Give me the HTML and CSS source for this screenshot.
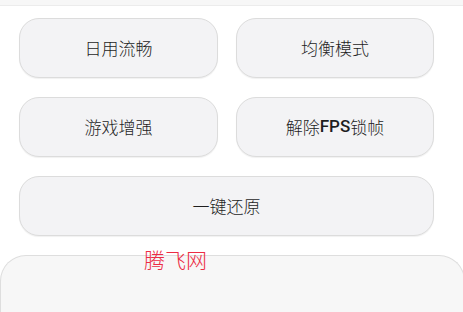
FILE: index.html
```html
<!DOCTYPE html>
<html lang="zh">
<head>
<meta charset="utf-8">
<link rel="stylesheet" href="styles.css">
</head>
<body>
<div class="topbar"></div>
<div class="grid">
  <div class="btn">日用流畅</div>
  <div class="btn">均衡模式</div>
  <div class="btn">游戏增强</div>
  <div class="btn">解除<span class="latin">FPS</span>锁帧</div>
  <div class="btn wide">一键还原</div>
</div>
<div class="panel-wrap">
  <div class="watermark">腾飞网</div>
  <div class="panel"></div>
</div>
</body>
</html>
```
FILE: styles.css
```css
html, body {
  margin: 0;
  padding: 0;
  background: #ffffff;
  width: 463px;
  height: 312px;
  overflow: hidden;
  font-family: Roboto, "Noto Sans CJK SC", sans-serif;
}
.topbar {
  height: 5px;
  background: #f7f7f7;
  border-bottom: 1px solid #ececec;
}
.grid {
  display: grid;
  grid-template-columns: 199px 198px;
  column-gap: 18px;
  row-gap: 19px;
  margin: 12px 0 0 19px;
}
.btn {
  box-sizing: border-box;
  height: 60px;
  border: 1.5px solid #dcdcdc;
  border-radius: 20px;
  background: #f3f3f5;
  box-shadow: 0 1px 1px rgba(0,0,0,0.06);
  display: flex;
  align-items: center;
  justify-content: center;
  font-size: 17px;
  font-weight: 300;
  color: #1e1e1e;
  padding-bottom: 2px;
}
.latin {
  font-weight: 500;
}
.wide {
  grid-column: 1 / 3;
}
.panel-wrap {
  position: relative;
  margin-top: 19px;
}
.panel {
  height: 60px;
  background: #f7f7f7;
  border: 1px solid #dedede;
  border-bottom: none;
  border-radius: 26px 26px 0 0;
  margin-right: -2px;
}
.watermark {
  position: absolute;
  left: 144px;
  top: -8px;
  font-size: 21px;
  line-height: 24px;
  color: #ec2c44;
  font-family: "Noto Sans CJK SC", sans-serif;
  font-weight: 300;
  z-index: 1;
}
```
